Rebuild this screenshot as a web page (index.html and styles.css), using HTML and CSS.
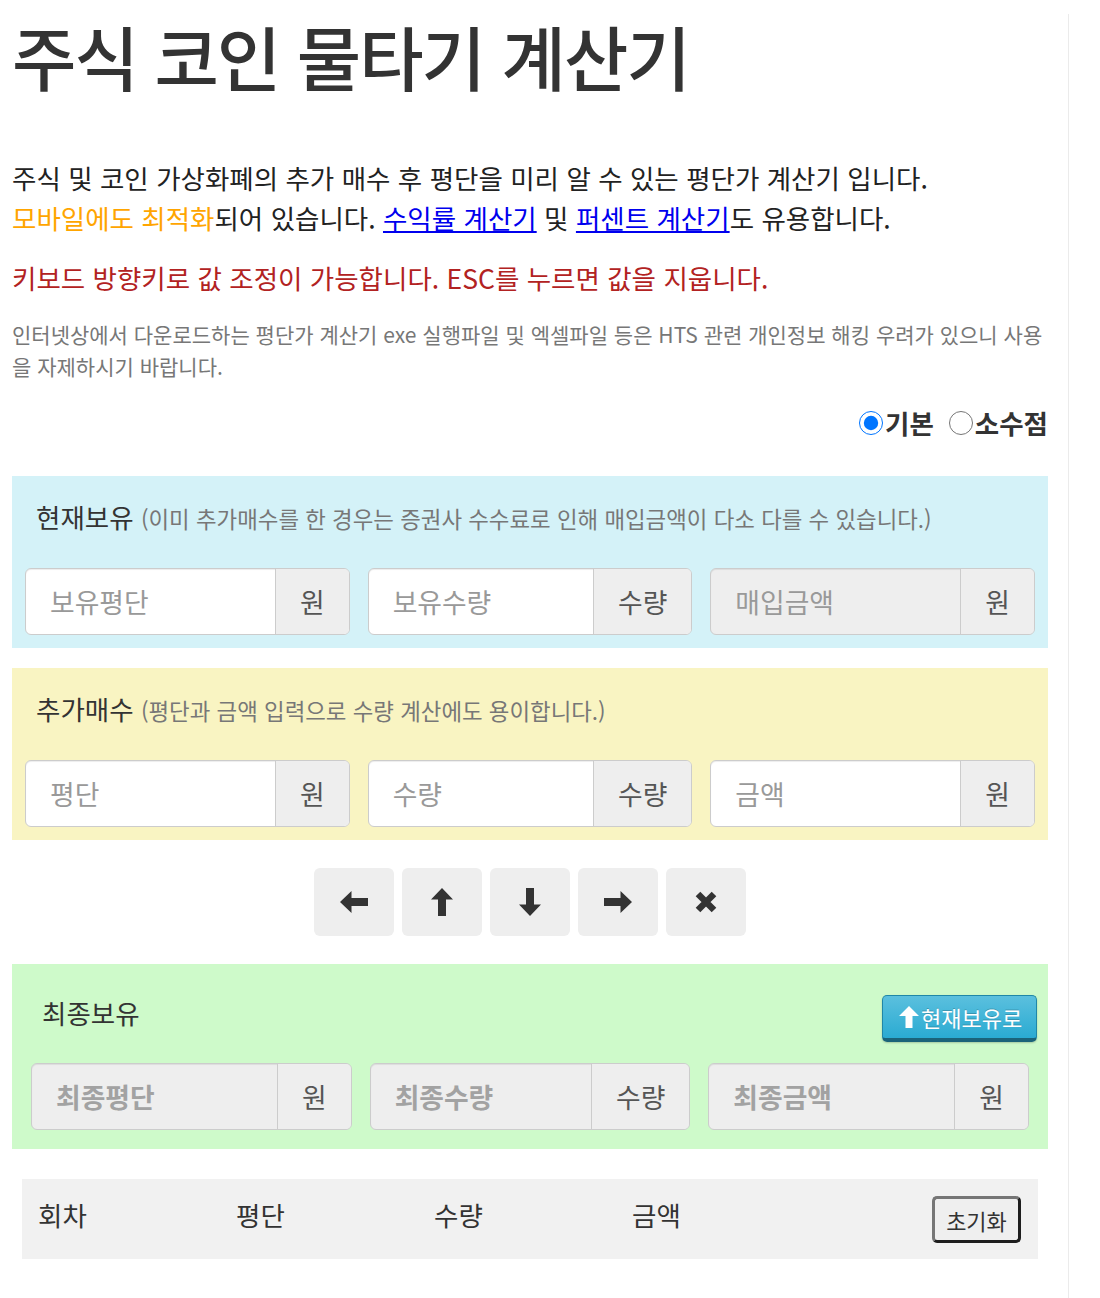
FILE: index.html
```html
<!DOCTYPE html>
<html lang="ko">

<head>
    <meta charset="utf-8">
    <title>주식 코인 물타기 계산기</title>
    <link rel="stylesheet" href="styles.css">
</head>

<body>
    <div class="page">
        <h1 class="title">주식 코인 물타기 계산기</h1>

        <p class="intro">주식 및 코인 가상화폐의 추가 매수 후 평단을 미리 알 수 있는 평단가 계산기 입니다.<br><span class="hl">모바일에도 최적화</span>되어 있습니다. <a href="#">수익률 계산기</a> 및 <a href="#">퍼센트 계산기</a>도 유용합니다.</p>
        <p class="notice">키보드 방향키로 값 조정이 가능합니다. ESC를 누르면 값을 지웁니다.</p>
        <p class="warn">인터넷상에서 다운로드하는 평단가 계산기 exe 실행파일 및 엑셀파일 등은 HTS 관련 개인정보 해킹 우려가 있으니 사용을 자제하시기 바랍니다.</p>

        <div class="mode">
            <label><input type="radio" name="mode" checked>기본</label>
            <label><input type="radio" name="mode">소수점</label>
        </div>

        <!-- 현재보유 -->
        <section class="panel panel-now">
            <h2 class="panel-title">현재보유 <small>(이미 추가매수를 한 경우는 증권사 수수료로 인해 매입금액이 다소 다를 수 있습니다.)</small></h2>
            <div class="fields">
                <div class="field"><input type="text" placeholder="보유평단"><span class="unit">원</span></div>
                <div class="field"><input type="text" placeholder="보유수량"><span class="unit">수량</span></div>
                <div class="field readonly"><input type="text" placeholder="매입금액" readonly><span class="unit">원</span></div>
            </div>
        </section>

        <!-- 추가매수 -->
        <section class="panel panel-add">
            <h2 class="panel-title">추가매수 <small>(평단과 금액 입력으로 수량 계산에도 용이합니다.)</small></h2>
            <div class="fields">
                <div class="field"><input type="text" placeholder="평단"><span class="unit">원</span></div>
                <div class="field"><input type="text" placeholder="수량"><span class="unit">수량</span></div>
                <div class="field"><input type="text" placeholder="금액"><span class="unit">원</span></div>
            </div>
        </section>

        <div class="keys">
            <button class="key" title="left">
                <svg width="28" height="22" viewBox="0 0 28 22"><path d="M0 11 L11.5 0 L11.5 7 L28 7 L28 15 L11.5 15 L11.5 22 Z" fill="#333"/></svg>
            </button>
            <button class="key" title="up">
                <svg width="22" height="28" viewBox="0 0 22 28"><path d="M11 0 L22 11.5 L15 11.5 L15 28 L7 28 L7 11.5 L0 11.5 Z" fill="#333"/></svg>
            </button>
            <button class="key" title="down">
                <svg width="22" height="28" viewBox="0 0 22 28"><path d="M11 28 L22 16.5 L15 16.5 L15 0 L7 0 L7 16.5 L0 16.5 Z" fill="#333"/></svg>
            </button>
            <button class="key" title="right">
                <svg width="28" height="22" viewBox="0 0 28 22"><path d="M28 11 L16.5 0 L16.5 7 L0 7 L0 15 L16.5 15 L16.5 22 Z" fill="#333"/></svg>
            </button>
            <button class="key" title="clear">
                <svg width="22" height="22" viewBox="0 0 22 22"><path d="M3 3 L19 19 M19 3 L3 19" stroke="#333" stroke-width="6.5"/></svg>
            </button>
        </div>

        <!-- 최종보유 -->
        <section class="panel panel-final">
            <div class="final-head">
                <h2 class="panel-title">최종보유</h2>
                <button class="btn-apply">
                    <svg width="20" height="22" viewBox="0 0 20 22"><path d="M10 0 L20 10 L13.5 10 L13.5 22 L6.5 22 L6.5 10 L0 10 Z" fill="#fff"/></svg>현재보유로
                </button>
            </div>
            <div class="fields">
                <div class="field readonly"><input type="text" placeholder="최종평단" readonly><span class="unit">원</span></div>
                <div class="field readonly"><input type="text" placeholder="최종수량" readonly><span class="unit">수량</span></div>
                <div class="field readonly"><input type="text" placeholder="최종금액" readonly><span class="unit">원</span></div>
            </div>
        </section>

        <div class="history">
            <span>회차</span>
            <span>평단</span>
            <span>수량</span>
            <span>금액</span>
            <button class="btn-reset">초기화</button>
        </div>
    </div>
</body>

</html>
```

FILE: styles.css
```css
/* page */
body {
    margin: 0;
    font-family: "Noto Sans CJK KR", "Noto Sans", sans-serif;
    color: #333;
    background-color: #fff;
}

.page {
    box-sizing: border-box;
    width: 1069px;
    min-height: 100vh;
    padding: 0 20px 40px 12px;
    border-right: 1px solid #ebebeb;
}

.title {
    margin: 14px 0 0;
    font-size: 70px;
    line-height: 84px;
    font-weight: 500;
    letter-spacing: -2px;
    color: #333;
}

.intro {
    margin: 60px 0 0;
    font-size: 26.5px;
    line-height: 40px;
    color: #222;
}

.intro .hl {
    color: #ffa500;
}

.intro a {
    color: #0000ee;
    text-decoration: underline;
}

.notice {
    margin: 20px 0 0;
    font-size: 26.5px;
    line-height: 40px;
    color: #b22222;
}

.warn {
    margin: 20px 0 0;
    font-size: 21px;
    line-height: 32px;
    color: #777;
}

/* 기본 / 소수점 */
.mode {
    display: flex;
    justify-content: flex-end;
    gap: 15px;
    margin-top: 24px;
    font-size: 26.5px;
    line-height: 34px;
    font-weight: bold;
}

.mode label {
    display: flex;
    align-items: center;
    gap: 2px;
}

.mode input {
    width: 24px;
    height: 24px;
    margin: 0;
}

/* panels */
.panel {
    padding: 24px 13px 13px;
}

.panel-now {
    margin-top: 36px;
    background-color: #d4f2f8;
}

.panel-add {
    margin-top: 20px;
    background-color: #f9f4c2;
}

.panel-final {
    margin-top: 28px;
    padding: 19px;
    background-color: #cefaca;
}

.panel-title {
    margin: 0 0 33px 11px;
    font-size: 26.5px;
    line-height: 34px;
    font-weight: normal;
    color: #333;
}

.panel-title small {
    font-size: 22.4px;
    color: #777;
}

.fields {
    display: grid;
    grid-template-columns: repeat(3, 1fr);
    gap: 18px;
}

.field {
    display: flex;
    height: 67px;
    box-sizing: border-box;
    border: 1px solid #ccc;
    border-radius: 6px;
    overflow: hidden;
    background-color: #fff;
    box-shadow: inset 0 1px 1px rgba(0, 0, 0, 0.075);
}

.field.readonly {
    background-color: #eee;
}

.field input {
    flex: 1;
    min-width: 0;
    border: none;
    padding: 0 0 0 24px;
    font-family: inherit;
    font-size: 26.8px;
    color: #555;
    background: transparent;
    outline: none;
}

.field input::placeholder {
    color: #999;
}

.panel-final .field input::placeholder {
    font-weight: bold;
    color: #a2a2a2;
}

.unit {
    display: flex;
    align-items: center;
    padding: 0 24px;
    border-left: 1px solid #ccc;
    background-color: #eee;
    font-size: 26.8px;
    color: #555;
}

/* arrow keys */
.keys {
    display: flex;
    justify-content: center;
    gap: 8px;
    margin-top: 28px;
}

.key {
    width: 80px;
    height: 68px;
    padding: 0;
    border: none;
    border-radius: 6px;
    background-color: #eee;
    display: flex;
    align-items: center;
    justify-content: center;
    cursor: pointer;
}

/* 최종보유 header */
.final-head {
    display: flex;
    justify-content: space-between;
    align-items: flex-start;
    padding: 12px 0 0 11px;
    margin: 0 -8px 21px 0;
}

.final-head .panel-title {
    margin: 0;
    line-height: 36px;
}

.btn-apply {
    box-sizing: border-box;
    width: 155px;
    height: 47px;
    display: flex;
    align-items: center;
    gap: 2px;
    padding: 0 0 0 16px;
    border: 1px solid #1f87a8;
    border-bottom: 4px solid #1b6379;
    border-radius: 5px;
    background: linear-gradient(#5bc0de, #2aabd2);
    box-shadow: 0 1px 2px rgba(0, 0, 0, 0.2);
    font-family: inherit;
    font-size: 22px;
    color: #fff;
    text-shadow: 0 -1px 0 rgba(0, 0, 0, 0.2);
    cursor: pointer;
}

/* history table */
.history {
    display: grid;
    grid-template-columns: repeat(4, 198px) 1fr;
    align-items: start;
    margin: 30px 10px 0;
    padding: 17px 17px 16px 16px;
    background-color: #f1f1f1;
}

.history span {
    font-size: 26.5px;
    line-height: 38px;
    color: #333;
}

.btn-reset {
    justify-self: end;
    box-sizing: border-box;
    width: 89px;
    height: 47px;
    padding: 0;
    border: 3px solid;
    border-color: #767676 #1e1e1e #1e1e1e #767676;
    border-radius: 5px;
    background-color: #efefef;
    font-family: inherit;
    font-size: 22px;
    color: #333;
    cursor: pointer;
}
```
